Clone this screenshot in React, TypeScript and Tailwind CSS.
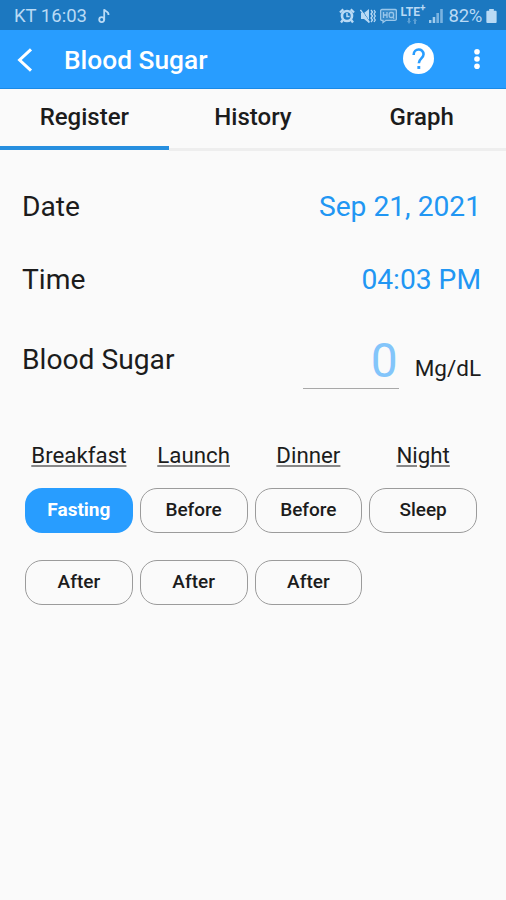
const tabs = ["Register", "History", "Graph"];

const meals = [
  { name: "Breakfast", slots: ["Fasting", "After"] },
  { name: "Launch", slots: ["Before", "After"] },
  { name: "Dinner", slots: ["Before", "After"] },
  { name: "Night", slots: ["Sleep"] },
];

function StatusBar() {
  return (
    <div className="flex h-[30px] items-center bg-[#1c78c0] pl-[14px] pr-[9px] pt-[2px] text-[#b9daf5]">
      <span className="w-[74px] text-[18.500px] leading-[28px]">KT 16:03</span>
      <svg className="ml-[10px] h-4 w-3" viewBox="0 0 12 16" fill="none" stroke="currentColor" strokeWidth="1.8">
        <circle cx="3.700" cy="11.600" r="2.500" />
        <path d="M6.200 12V1.200c.4 2.400 4.800 2 4.300 5.800" />
      </svg>
      <svg className="ml-auto h-[18px] w-4" viewBox="0 0 16 18" fill="none" stroke="currentColor">
        <circle cx="8" cy="9" r="5" strokeWidth="2.600" />
        <path d="M8 6v3.400h2.600" strokeWidth="1.500" />
        <path d="M1 5.500 4.300 2.300M15 5.500l-3.300-3.200M3.800 13 2 15.500M12.200 13l1.800 2.500" strokeWidth="2.300" />
      </svg>
      <svg className="ml-[5px] h-4 w-4" viewBox="0 0 16 16" fill="currentColor">
        <path d="M1 5h3l5-4v14l-5-4H1z" />
        <path d="m1.500 1.500 8 12" stroke="#1c78c0" strokeWidth="1" />
        <path d="m.5 2 9 12.500" stroke="currentColor" strokeWidth="1.300" />
        <path d="m11 2 1.500 2L11 6l1.500 2L11 10l1.500 2-1.500 2M14 2l1.300 2L14 6l1.300 2L14 10l1.300 2-1.300 2" fill="none" stroke="currentColor" strokeWidth="1.300" />
      </svg>
      <svg className="ml-[4px] h-4 w-[17px] opacity-80" viewBox="0 0 17 16" fill="none" stroke="currentColor" strokeWidth="1.300">
        <path d="M2 1.500h13q1.400 0 1.400 1.400v8q0 1.400-1.400 1.400H6l-3 2.200v-2.200H2Q.6 12.300 .6 10.900V2.900Q.6 1.500 2 1.500z" fill="currentColor" fillOpacity=".2" />
        <path d="M3.500 4v6M7 4v6M3.500 7H7M12.500 9l1.600 1.600" />
        <rect x="9.200" y="4.500" width="4.300" height="5" rx="1.500" />
      </svg>
      <div className="ml-[4px] flex h-5 w-[25px] flex-col">
        <span className="flex h-[12px] text-[12px] font-bold leading-[12px]">
          LTE<sup className="top-[-2px] text-[10px] leading-[8px]">+</sup>
        </span>
        <svg className="ml-[5px] h-[6px] w-3 opacity-40" viewBox="0 0 12 6" fill="currentColor">
          <path d="M2 0h2v3h1L3 6 1 3h1zM8 6h2V3h1L9 0 7 3h1z" />
        </svg>
      </div>
      <svg className="ml-[3px] h-[14px] w-[14px]" viewBox="0 0 14 14" fill="currentColor">
        <path d="M0 11h2.400v3H0zM3.700 8h2.500v6H3.700z" opacity=".85" />
        <path d="M7.400 4h2.600v10H7.400zM11.200 0h2.600v14h-2.600z" opacity=".6" />
      </svg>
      <span className="ml-[6px] text-[18.500px] leading-[28px] tracking-[-0.3px]">82%</span>
      <svg className="ml-[4px] h-[14px] w-[11px]" viewBox="0 0 11 15" fill="currentColor">
        <path d="M3 0h5v2h2q1 0 1 1v11q0 1-1 1H1q-1 0-1-1V3q0-1 1-1h2z" />
      </svg>
    </div>
  );
}

function AppBar() {
  return (
    <header className="flex h-[59px] items-center border-b border-[#1a8ae6] bg-[#289dff] text-white">
      <svg className="ml-[17px] mt-px h-6 w-4" viewBox="0 0 16 24" fill="none" stroke="currentColor" strokeWidth="3">
        <path d="M14 1.300 2.600 12 14 22.700" />
      </svg>
      <h1 className="ml-[31px] mt-[2px] text-[26.300px] font-medium leading-[30px]">Blood Sugar</h1>
      <svg className="ml-auto mr-[40px] mb-[2px] h-[31px] w-[31px]" viewBox="0 0 30 30">
        <circle cx="15" cy="15" r="15" fill="white" />
        <path d="M10.300 11.500c0-6.800 9.600-6.800 9.600-.5 0 3.600-4.600 4.200-4.600 8.500" fill="none" stroke="#289dff" strokeWidth="2.500" />
        <rect x="13.900" y="22.300" width="2.800" height="2.800" fill="#289dff" />
      </svg>
      <svg className="mr-[26px] h-[22px] w-[6px]" viewBox="0 0 6 22" fill="currentColor">
        <circle cx="3" cy="3.700" r="2.800" />
        <circle cx="3" cy="11" r="2.800" />
        <circle cx="3" cy="18.300" r="2.800" />
      </svg>
    </header>
  );
}

export default function App() {
  return (
    <div className="flex h-[900px] w-[506px] flex-col overflow-hidden bg-[#fafafa] font-['Roboto',sans-serif] text-[#1c1c1c]">
      <StatusBar />
      <AppBar />
      <nav className="grid h-[62px] grid-cols-3 text-center text-[24px] font-medium">
        {tabs.map((tab, i) => (
          <button key={tab} className="flex flex-col">
            <span className="h-[57px] w-full pt-[14px] leading-[28px]">{tab}</span>
            <span className={i === 0 ? "h-[4px] w-full bg-[#278fdf]" : "mt-[2px] h-[3px] w-full bg-[#eeeeee]"} />
          </button>
        ))}
      </nav>
      <main className="pl-[22px] pr-[25px] text-[28.200px]">
        <div className="mt-[38px] flex h-9 items-center justify-between">
          <span>Date</span>
          <span className="text-[#2196f3]">Sep 21, 2021</span>
        </div>
        <div className="mt-[37px] flex h-9 items-center justify-between">
          <span>Time</span>
          <span className="text-[#2196f3]">04:03 PM</span>
        </div>
        <div className="mt-[37px] flex h-[54px] justify-between">
          <span className="pt-[7px] leading-[36px]">Blood Sugar</span>
          <div className="flex">
            <div className="h-[54px] w-[96px] border-b border-[#a8a8a8] pr-px text-right text-[48px] leading-[51px] text-[#83c5fa]">0</div>
            <span className="ml-4 pt-[19px] text-[22.500px] leading-[28px]">Mg/dL</span>
          </div>
        </div>
      </main>
      <section className="ml-[25px] mt-[52px] grid w-[452px] grid-cols-4 gap-x-[7px]">
        {meals.map((meal) => (
          <div key={meal.name} className="flex flex-col items-center">
            <h2 className="h-[47px] text-[22.300px] leading-[28px] underline decoration-[#888] decoration-[1.5px] underline-offset-[1.500px]">{meal.name}</h2>
            <div className="flex w-full flex-col gap-[27px]">
              {meal.slots.map((slot) => (
                <button
                  key={slot}
                  className={
                    slot === "Fasting"
                      ? "h-[45px] rounded-[17px] bg-[#289dff] text-[19px] font-bold text-white"
                      : "h-[45px] rounded-[17px] border border-[#9b9b9b] text-[19px] font-medium"
                  }
                >
                  {slot}
                </button>
              ))}
            </div>
          </div>
        ))}
      </section>
    </div>
  );
}
